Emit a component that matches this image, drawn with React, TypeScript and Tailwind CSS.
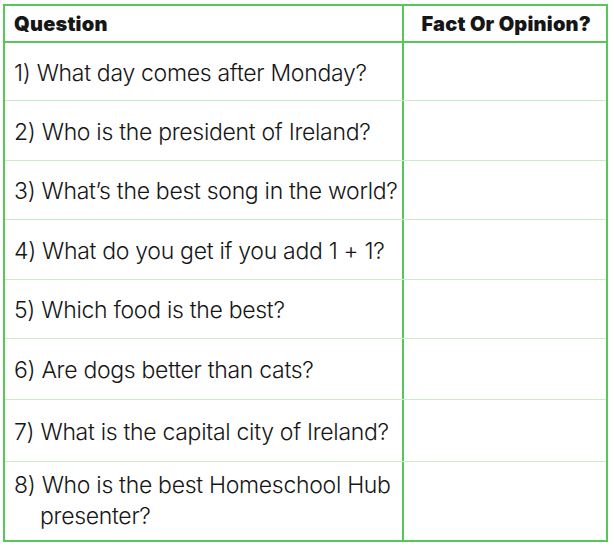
import React from "react";

const rows: { n: string; q: string; h: string }[] = [
  { n: "1)", q: "What day comes after Monday?", h: "h-[58px]" },
  { n: "2)", q: "Who is the president of Ireland?", h: "h-[60px]" },
  { n: "3)", q: "What’s the best song in the world?", h: "h-[59px]" },
  { n: "4)", q: "What do you get if you add 1 + 1?", h: "h-[60px]" },
  { n: "5)", q: "Which food is the best?", h: "h-[59px]" },
  { n: "6)", q: "Are dogs better than cats?", h: "h-[61px]" },
  { n: "7)", q: "What is the capital city of Ireland?", h: "h-[62px]" },
];

export default function App() {
  return (
    <div className="w-[614px] h-[549px] bg-white pt-[4px] pl-[3px]" style={{ fontFamily: "Inter, 'Liberation Sans', sans-serif" }}>
      <div className="w-[605px] h-[538px] border-2 border-[#58c75a] flex flex-col text-[#161616]">
        <div className="flex h-[37px] border-b-2 border-[#58c75a] shrink-0">
          <div className="w-[399px] border-r-2 border-[#58c75a] pl-[9px] flex items-center text-[20px] font-black tracking-[0.2px]">
            Question
          </div>
          <div className="flex-1 flex items-center justify-end pr-[15px] text-[20px] font-black tracking-[0.2px]">
            Fact Or Opinion?
          </div>
        </div>
        {rows.map((r) => (
          <div key={r.n} className={`flex ${r.h} border-b border-[#c9ecc9] shrink-0`}>
            <div className="w-[399px] border-r-2 border-[#58c75a] pl-[9px] pt-[3px] flex items-center text-[23px] font-light tracking-[-0.3px] whitespace-nowrap">
              {r.n} {r.q}
            </div>
            <div className="flex-1" />
          </div>
        ))}
        <div className="flex flex-1">
          <div className="w-[399px] border-r-2 border-[#58c75a] pl-[35px] -indent-[26px] flex items-center text-[23px] font-light tracking-[-0.3px] leading-[31px]">
            <p>8) Who is the best Homeschool Hub presenter?</p>
          </div>
          <div className="flex-1" />
        </div>
      </div>
    </div>
  );
}
